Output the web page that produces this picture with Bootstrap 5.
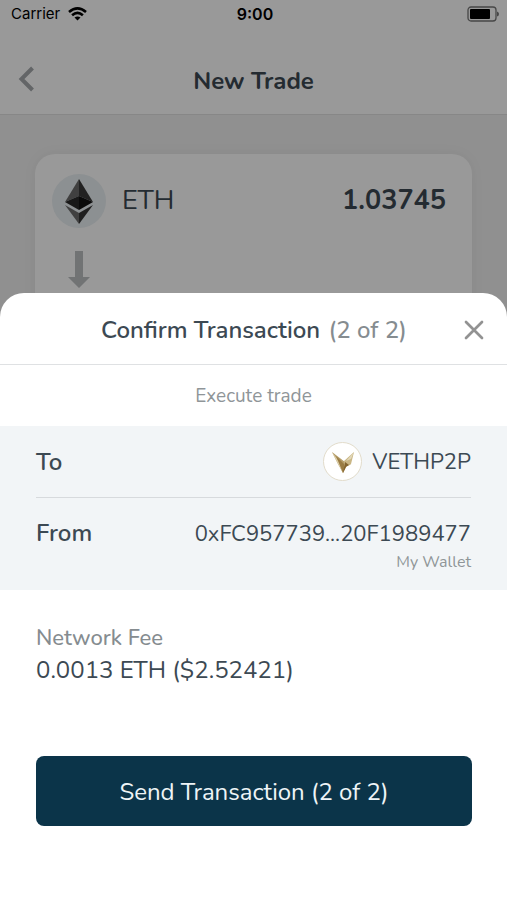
<!DOCTYPE html>
<html lang="en">
<head>
<meta charset="utf-8">
<meta name="viewport" content="width=device-width, initial-scale=1">
<title>New Trade</title>
<link href="https://cdn.jsdelivr.net/npm/bootstrap@5.3.0/dist/css/bootstrap.min.css" rel="stylesheet">
<style>
  body { font-family: Nunito, Lato, "Open Sans", sans-serif; color: #3c4953; background: #f0f0f0; }
  .status-bar { height: 28px; padding: 0 8px 0 11px; font: 400 15px/28px Inter, "Liberation Sans", sans-serif; color: #000; }
  .status-bar .clock { font-size: 16px; font-weight: 600; }
  .top-area { background: #fff; border-bottom: 1px solid #e2e2e2; }
  .title-bar { height: 86px; padding: 0 16px 17px; }
  .title-bar h1 { font-size: 24px; line-height: 32px; font-weight: 700; }
  .side-slot { width: 36px; }
  .trade-card { margin: 39px 35px 0; min-height: 300px; padding: 20px 26px 20px 17px; background: #fff; border-radius: 20px; box-shadow: 0 0 14px rgba(0,0,0,.05); }
  .coin { width: 54px; height: 54px; background: #eaf0f3; }
  .coin-name { font-size: 27px; line-height: 36px; }
  .coin-amount { font-size: 27px; line-height: 36px; font-weight: 700; }
  .arrow-slot { width: 54px; padding-top: 22px; }
  .dimmer { background: rgba(0,0,0,.4); }
  .sheet { background: #fff; border-radius: 24px 24px 0 0; padding-bottom: 74px; }
  .sheet-head { height: 72px; padding: 3px 15px 0 16px; border-bottom: 1px solid #dfe1e3; }
  .sheet-head h2 { font-size: 24px; line-height: 32px; font-weight: 600; }
  .quiet { color: #858c90; }
  .sheet-head .quiet { font-weight: 500; margin-left: 2px; }
  .sheet-note { padding-top: 2px; font-size: 19px; line-height: 59px; color: #8f9598; }
  .details { background: #f2f5f7; padding: 0 36px; }
  .detail { padding: 16px 0; line-height: 32px; }
  .detail + .detail { border-top: 1px solid #d7dadd; padding: 19px 0 16px; }
  .detail dt { font-size: 24px; font-weight: 600; }
  .detail dd { font-size: 22px; }
  .detail .wallet { font-size: 16px; line-height: 24px; color: #8f9598; }
  .token-row { gap: 10px; }
  .token { width: 39px; height: 39px; background: #fff; border: 1px solid #e2dccb; }
  .fee { padding: 32px 36px 0; }
  .fee-name { font-size: 22px; line-height: 32px; font-weight: 500; }
  .fee-sum { font-size: 24px; line-height: 32px; }
  .send { margin: 70px 35px 0 36px; }
  .btn-send { --bs-btn-bg: #0b3449; --bs-btn-color: #eef4f7; --bs-btn-hover-bg: #12455f; --bs-btn-hover-color: #fff; --bs-btn-border-radius: 8px; --bs-btn-border-width: 0; --bs-btn-font-size: 24px; height: 70px; padding-top: 8px; }
</style>
<script src="https://cdn.jsdelivr.net/npm/bootstrap@5.3.0/dist/js/bootstrap.bundle.min.js"></script>
</head>
<body class="vh-100 overflow-hidden">
<header class="top-area">
  <div class="status-bar d-flex align-items-center">
    <div class="d-flex align-items-center gap-2 flex-fill w-100"><span>Carrier</span>
      <svg width="19" height="14" viewBox="0 0 19 14" fill="none" stroke="#000" stroke-width="2.6" aria-hidden="true"><path d="M1 5Q9.500-2.200 18 5M4.100 8.300Q9.500 3.600 14.900 8.300"/><path d="M9.500 13.600 6.500 10.600Q9.500 8.200 12.500 10.600Z" fill="#000" stroke="none"/></svg>
    </div>
    <span class="clock">9:00</span>
    <div class="d-flex justify-content-end w-100">
      <svg width="33" height="16" viewBox="0 0 33 16" aria-hidden="true"><rect x="2" y="1" width="28" height="14" rx="3" fill="none" stroke="#777" stroke-width="1.300"/><rect x="4" y="3" width="20" height="10" rx="1" fill="#000"/><path d="M31 5.500q2 .5 2 2.500t-2 2.500z" fill="#777"/></svg>
    </div>
  </div>
  <div class="title-bar d-flex align-items-end justify-content-between">
    <a href="#" class="side-slot d-flex" aria-label="Back"><svg width="22" height="34" viewBox="0 0 22 34" fill="none" stroke="#a5a9ac" stroke-width="4"><path d="M16.500 5 5.500 16l11 11"/></svg></a>
    <h1 class="m-0">New Trade</h1>
    <span class="side-slot"></span>
  </div>
</header>
<main>
  <section class="trade-card">
    <div class="d-flex align-items-center">
      <div class="coin rounded-circle d-flex align-items-center justify-content-center">
        <svg width="30" height="46" viewBox="0 0 30 46" aria-hidden="true"><path d="M15 1 1 24l14-6z" fill="#6b6b6b"/><path d="m15 1 14 23-14-6z" fill="#3a3a3a"/><path d="M1 24l14-6v14z" fill="#292929"/><path d="m29 24-14-6v14z" fill="#111"/><path d="m1 27 14 8v11z" fill="#6b6b6b"/><path d="m29 27-14 8v11z" fill="#343434"/></svg>
      </div>
      <span class="coin-name ms-3 flex-fill">ETH</span>
      <span class="coin-amount">1.03745</span>
    </div>
    <div class="arrow-slot d-flex justify-content-center"><svg width="22" height="38" viewBox="0 0 22 38" aria-hidden="true"><path d="M7 1h8v26h7L11 38 0 27h7z" fill="#bcc0c2"/></svg></div>
  </section>
</main>
<div class="dimmer position-fixed top-0 start-0 w-100 h-100"></div>
<section class="sheet fixed-bottom" role="dialog" aria-labelledby="sheetTitle">
  <div class="sheet-head d-flex align-items-center justify-content-between">
    <span class="side-slot"></span>
    <h2 class="m-0" id="sheetTitle">Confirm Transaction <span class="quiet">(2 of 2)</span></h2>
    <button type="button" class="side-slot btn p-0 border-0 d-flex justify-content-center" aria-label="Close"><svg width="20" height="20" viewBox="0 0 20 20" fill="none" stroke="#929292" stroke-width="2.700" stroke-linecap="round"><path d="m2 2 16 16M18 2 2 18"/></svg></button>
  </div>
  <p class="sheet-note text-center m-0">Execute trade</p>
  <dl class="details m-0">
    <div class="detail d-flex align-items-center justify-content-between">
      <dt>To</dt>
      <dd class="token-row m-0 d-flex align-items-center">
        <span class="token rounded-circle d-flex align-items-center justify-content-center"><svg width="24" height="24" viewBox="0 0 24 24" aria-hidden="true"><path d="M1 2 14 12l1 5-3 6-5-9z" fill="#b49c68"/><path d="M1 2 9 13l3 10-6-11z" fill="#ddd0ab"/><path d="m5 6 8 8 1 4-2 5z" fill="#9a7c43"/><path d="M23 2 13 11v6l6-2 1-1 1-4z" fill="#c9b685"/><path d="m14 12 4 3-3 2-3 6z" fill="#83642f"/><path d="M23 2 15 11l5-2z" fill="#e2d8b9"/></svg></span>
        <span>VETHP2P</span>
      </dd>
    </div>
    <div class="detail d-flex align-items-baseline justify-content-between">
      <dt>From</dt>
      <dd class="m-0 text-end">0xFC957739...20F1989477<div class="wallet">My Wallet</div></dd>
    </div>
  </dl>
  <div class="fee">
    <div class="fee-name quiet">Network Fee</div>
    <div class="fee-sum">0.0013 ETH ($2.52421)</div>
  </div>
  <div class="send d-grid"><button type="button" class="btn btn-send">Send Transaction (2 of 2)</button></div>
</section>
</body>
</html>
